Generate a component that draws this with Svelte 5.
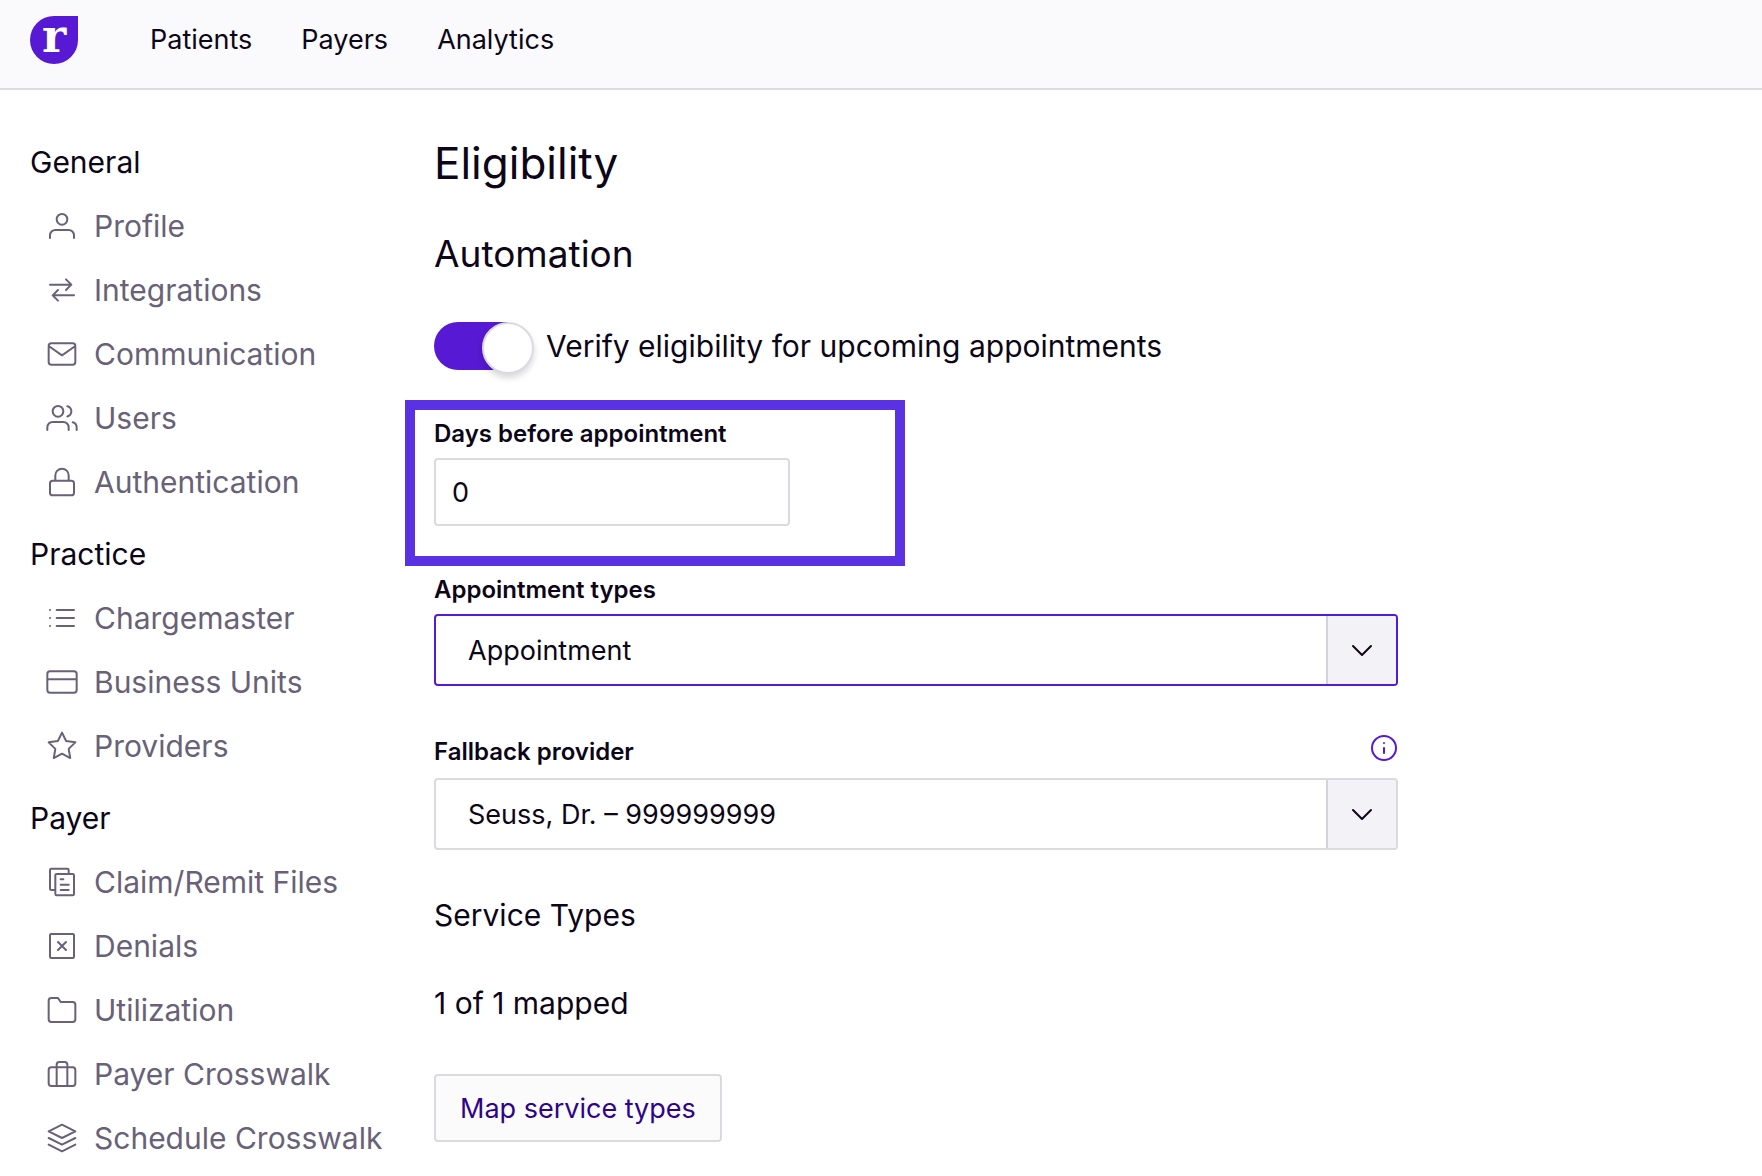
<script>
    const navLinks = ["Patients", "Payers", "Analytics"];

    const sections = [
        {
            title: "General",
            items: [
                { name: "Profile", icon: "user" },
                { name: "Integrations", icon: "swap" },
                { name: "Communication", icon: "mail" },
                { name: "Users", icon: "users" },
                { name: "Authentication", icon: "lock" }
            ]
        }, {
            title: "Practice",
            items: [
                { name: "Chargemaster", icon: "list" },
                { name: "Business Units", icon: "card" },
                { name: "Providers", icon: "star" }
            ]
        }, {
            title: "Payer",
            items: [
                { name: "Claim/Remit Files", icon: "files" },
                { name: "Denials", icon: "xbox" },
                { name: "Utilization", icon: "folder" },
                { name: "Payer Crosswalk", icon: "briefcase" },
                { name: "Schedule Crosswalk", icon: "layers" }
            ]
        }
    ];

    // stroke paths on a 24x24 grid
    const icons = {
        user: "M21 21v-2a4 4 0 0 0-4-4H7a4 4 0 0 0-4 4v2M16 7a4 4 0 1 1-8 0 4 4 0 0 1 8 0z",
        swap: "M3 8h16M15 4l4 4-4 4M21 16H5M9 12l-4 4 4 4",
        mail: "M4 4h16a2 2 0 0 1 2 2v12a2 2 0 0 1-2 2H4a2 2 0 0 1-2-2V6a2 2 0 0 1 2-2zM22 6l-10 7L2 6",
        users: "M17 21v-2a4 4 0 0 0-4-4H5a4 4 0 0 0-4 4v2M13 7a4 4 0 1 1-8 0 4 4 0 0 1 8 0zM23 21v-2a4 4 0 0 0-3-3.87M16 3.13a4 4 0 0 1 0 7.75",
        lock: "M5 11h14a2 2 0 0 1 2 2v7a2 2 0 0 1-2 2H5a2 2 0 0 1-2-2v-7a2 2 0 0 1 2-2zM7 11V7a5 5 0 0 1 10 0v4",
        list: "M8 6h13M8 12h13M8 18h13M3 6h.01M3 12h.01M3 18h.01",
        card: "M3 4h18a2 2 0 0 1 2 2v12a2 2 0 0 1-2 2H3a2 2 0 0 1-2-2V6a2 2 0 0 1 2-2zM1 10h22",
        star: "M12 2l3.09 6.26L22 9.27l-5 4.87 1.18 6.88L12 17.77l-6.18 3.25L7 14.14 2 9.27l6.91-1.01L12 2z",
        files: "M7 18H4a1 1 0 0 1-1-1V3a1 1 0 0 1 1-1h12a1 1 0 0 1 1 1v3M8 6h12a1 1 0 0 1 1 1v14a1 1 0 0 1-1 1H8a1 1 0 0 1-1-1V7a1 1 0 0 1 1-1zM11 10h2M11 14h6M11 18h6",
        xbox: "M4 3h16a1 1 0 0 1 1 1v16a1 1 0 0 1-1 1H4a1 1 0 0 1-1-1V4a1 1 0 0 1 1-1zM9 9l6 6M15 9l-6 6",
        folder: "M22 19a2 2 0 0 1-2 2H4a2 2 0 0 1-2-2V5a2 2 0 0 1 2-2h5l2 3h9a2 2 0 0 1 2 2z",
        briefcase: "M4 7h16a2 2 0 0 1 2 2v10a2 2 0 0 1-2 2H4a2 2 0 0 1-2-2V9a2 2 0 0 1 2-2zM16 21V5a2 2 0 0 0-2-2h-4a2 2 0 0 0-2 2v16",
        layers: "M12 2L2 7l10 5 10-5-10-5zM2 17l10 5 10-5M2 12l10 5 10-5"
    };

    let verify = true;
    let days = "0";
    let appointmentType = "Appointment";
    let provider = "Seuss, Dr. – 999999999";
</script>

<style>
    :global(body) {
        margin: 0;
        background: #fff;
    }

    .app {
        font-family: Inter, "Liberation Sans", sans-serif;
        color: #0d0619;
        min-height: 100vh;
    }

    a {
        color: inherit;
        text-decoration: none;
    }

    h1, h2, h3, p, ul {
        margin: 0;
        padding: 0;
        font-weight: 400;
    }

    header {
        display: flex;
        align-items: center;
        gap: 72px;
        padding: 16px 30px 24px;
        background: #fafafc;
        border-bottom: 2px solid #dadae2;
    }

    .logo {
        display: flex;
        align-items: center;
        justify-content: center;
        width: 48px;
        height: 48px;
        border-radius: 50% 0 50% 50%;
        background: #5719d3;
        color: #fff;
        font: bold 46px/48px "DejaVu Serif", serif;
        padding-bottom: 8px;
        box-sizing: border-box;
    }

    .top_nav {
        display: flex;
        gap: 49px;
        font-size: 27px;
        line-height: 48px;
    }

    .layout {
        display: flex;
        align-items: flex-start;
    }

    .sidebar {
        flex: 0 0 404px;
        padding: 40px 0 0 30px;
        box-sizing: border-box;
        margin-right: 30px;
        font-size: 30px;
        line-height: 64px;
        white-space: nowrap;
    }

    .sidebar ul {
        list-style: none;
        margin-bottom: 8px;
        color: #686178;
    }

    .sidebar h2 {
        font-size: 30px;
    }

    .sidebar li a {
        display: flex;
        align-items: center;
        gap: 16px;
        padding-left: 16px;
    }

    svg {
        flex: none;
        display: block;
        fill: none;
        stroke: currentColor;
        stroke-linecap: round;
        stroke-linejoin: round;
    }

    main {
        flex: 1 1 0;
        max-width: 964px;
        padding: 45px 30px 32px 0;
    }

    h1 {
        font-size: 44px;
        line-height: 56px;
    }

    .automation {
        margin-top: 39px;
        font-size: 37px;
        line-height: 48px;
    }

    .toggle {
        display: flex;
        align-items: center;
        gap: 12px;
        margin-top: 44px;
        font-size: 30px;
        line-height: 48px;
    }

    .toggle input {
        appearance: none;
        flex: none;
        position: relative;
        width: 100px;
        height: 48px;
        margin: 0;
        border-radius: 24px;
        background: linear-gradient(#5719d3, #5719d3) left / 74px 48px no-repeat;
    }

    .toggle input::after {
        content: "";
        position: absolute;
        top: 0;
        right: 0;
        width: 52px;
        height: 52px;
        box-sizing: border-box;
        border: 2px solid #dadae2;
        border-radius: 50%;
        background: #fff;
        box-shadow: 0 4px 6px rgba(13, 6, 25, 0.16);
    }

    .field {
        position: relative;
    }

    .field label {
        display: block;
        font-size: 24px;
        font-weight: 600;
        line-height: 28px;
        margin-bottom: 10px;
    }

    .days {
        margin-top: 50px;
    }

    /* callout frame round the field */
    .days::after {
        content: "";
        position: absolute;
        top: -20px;
        left: -29px;
        bottom: -40px;
        width: 480px;
        border: 10px solid #5a31e3;
        pointer-events: none;
    }

    .days input {
        display: block;
        box-sizing: border-box;
        width: 100%;
        max-width: 356px;
        height: 68px;
        padding: 0 16px;
        border: 2px solid #dadae2;
        border-radius: 4px;
        background: #fff;
        color: inherit;
        font: inherit;
        font-size: 27px;
    }

    .types {
        margin-top: 50px;
    }

    .fallback {
        margin-top: 46px;
    }

    .label_row {
        display: flex;
        justify-content: space-between;
        margin-bottom: 6px;
    }

    .label_row label {
        line-height: 40px;
        margin: 0;
    }

    .info {
        height: 32px;
        padding: 0;
        margin-right: -2px;
        border: 0;
        background: none;
        color: #5719d3;
    }

    .select {
        display: grid;
        grid-template-columns: 1fr 70px;
        height: 72px;
        box-sizing: border-box;
        border: 2px solid #dadae2;
        border-radius: 4px;
        overflow: hidden;
        background: #fff;
    }

    .active {
        border-color: #5719d3;
    }

    .select select {
        grid-area: 1 / 1 / 2 / 3;
        appearance: none;
        border: 0;
        outline: 0;
        padding: 0 80px 0 32px;
        background: transparent;
        color: inherit;
        font: inherit;
        font-size: 27px;
    }

    .arrow {
        grid-area: 1 / 2;
        display: flex;
        align-items: center;
        justify-content: center;
        background: #f3f2f7;
        border-left: 2px solid #d3d1df;
        pointer-events: none;
    }

    h3 {
        margin-top: 45px;
        font-size: 30px;
        line-height: 40px;
    }

    .mapped {
        margin-top: 48px;
        font-size: 30px;
        line-height: 40px;
    }

    .map_button {
        display: block;
        height: 68px;
        margin-top: 51px;
        padding: 0 24px;
        border: 2px solid #dadae2;
        border-radius: 4px;
        background: #fbfbfc;
        color: #2f0489;
        font: inherit;
        font-size: 27px;
    }
</style>

<div class="app">
    <header>
        <a class="logo" href="#home">r</a>
        <nav class="top_nav">
            {#each navLinks as link}
            <a href="#{link.toLowerCase()}">{link}</a>
            {/each}
        </nav>
    </header>
    <div class="layout">
        <nav class="sidebar">
            {#each sections as section}
            <h2>{section.title}</h2>
            <ul>
                {#each section.items as item}
                <li>
                    <a href="#{item.icon}">
                        <svg width="32" height="32" viewBox="0 0 24 24" stroke-width="1.5">
                            <path d={icons[item.icon]} />
                        </svg>
                        {item.name}
                    </a>
                </li>
                {/each}
            </ul>
            {/each}
        </nav>
        <main>
            <h1>Eligibility</h1>
            <h2 class="automation">Automation</h2>
            <label class="toggle">
                <input type="checkbox" role="switch" bind:checked={verify}>
                Verify eligibility for upcoming appointments
            </label>

            <div class="field days">
                <label for="days">Days before appointment</label>
                <input id="days" type="text" inputmode="numeric" bind:value={days}>
            </div>

            <div class="field types">
                <label for="types">Appointment types</label>
                <div class="select active">
                    <select id="types" bind:value={appointmentType}>
                        <option>Appointment</option>
                    </select>
                    <span class="arrow">
                        <svg width="24" height="24" viewBox="0 0 24 24" stroke-width="2">
                            <path d="M3 8l9 9 9-9" />
                        </svg>
                    </span>
                </div>
            </div>

            <div class="field fallback">
                <div class="label_row">
                    <label for="provider">Fallback provider</label>
                    <button class="info" type="button" aria-label="About fallback provider">
                        <svg width="32" height="32" viewBox="0 0 32 32" stroke-width="2">
                            <circle cx="16" cy="16" r="12" />
                            <path d="M16 16v5M16 11v.01" />
                        </svg>
                    </button>
                </div>
                <div class="select">
                    <select id="provider" bind:value={provider}>
                        <option>Seuss, Dr. – 999999999</option>
                    </select>
                    <span class="arrow">
                        <svg width="24" height="24" viewBox="0 0 24 24" stroke-width="2">
                            <path d="M3 8l9 9 9-9" />
                        </svg>
                    </span>
                </div>
            </div>

            <h3>Service Types</h3>
            <p class="mapped">1 of 1 mapped</p>
            <button class="map_button" type="button">Map service types</button>
        </main>
    </div>
</div>
